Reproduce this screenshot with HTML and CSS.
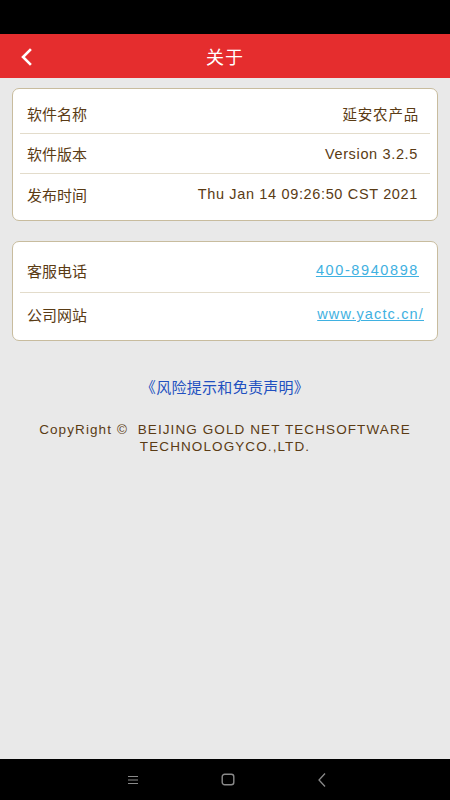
FILE: index.html
```html
<!DOCTYPE html>
<html lang="zh">
<head>
<meta charset="utf-8">
<title>关于</title>
<link rel="stylesheet" href="styles.css">
</head>
<body>
<div class="screen">
  <div class="status"></div>
  <header class="header">
    <svg class="back" width="14" height="18" viewBox="0 0 14 18"><path d="M10 2 L3 9 L10 16" fill="none" stroke="#fff" stroke-width="2.6" stroke-linecap="square" stroke-linejoin="miter"/></svg>
    <h1 class="title">关于</h1>
  </header>
  <main class="content">
    <section class="card card-info">
      <div class="row"><span class="label">软件名称</span><span class="value value-cjk">延安农产品</span></div>
      <div class="row"><span class="label">软件版本</span><span class="value">Version 3.2.5</span></div>
      <div class="row"><span class="label">发布时间</span><span class="value">Thu Jan 14 09:26:50 CST 2021</span></div>
    </section>
    <section class="card card-contact">
      <div class="row"><span class="label">客服电话</span><a class="link link-phone" href="#">400-8940898</a></div>
      <div class="row"><span class="label">公司网站</span><a class="link link-web" href="#">www.yactc.cn/</a></div>
    </section>
    <p class="disclaimer">《风险提示和免责声明》</p>
    <p class="copyright">CopyRight ©&nbsp; BEIJING GOLD NET TECHSOFTWARE<br>TECHNOLOGYCO.,LTD.</p>
  </main>
  <nav class="navbar">
    <svg width="12" height="12" viewBox="0 0 12 12"><path d="M1 2.5H11M1 6H11M1 9.5H11" stroke="#8a8a8a" stroke-width="1.2"/></svg>
    <svg width="14" height="13" viewBox="0 0 14 13"><rect x="1.2" y="1.2" width="11.6" height="10.6" rx="2.5" fill="none" stroke="#8a8a8a" stroke-width="1.4"/></svg>
    <svg width="10" height="16" viewBox="0 0 10 16"><path d="M8 1.5 L2 8 L8 14.5" fill="none" stroke="#8a8a8a" stroke-width="1.3"/></svg>
  </nav>
</div>
</body>
</html>
```
FILE: styles.css
```css
* { box-sizing: border-box; }
html, body { margin: 0; padding: 0; }
body {
  font-family: "Liberation Sans", "Noto Sans CJK SC", sans-serif;
  background: #e9e9e9;
}
.screen {
  width: 450px;
  height: 800px;
  display: flex;
  flex-direction: column;
  overflow: hidden;
}
.status { height: 34px; background: #000; flex: none; }
.header {
  height: 44px;
  flex: none;
  background: #e52d2e;
  display: flex;
  align-items: center;
  justify-content: center;
  position: relative;
}
.back { position: absolute; left: 20px; top: 14px; }
.title {
  margin: 0;
  font-family: "Noto Sans CJK SC", sans-serif;
  font-size: 18px;
  font-weight: 400;
  color: #fff;
  letter-spacing: 1px;
}
.content {
  flex: 1;
  padding: 10px 12px 0;
  display: flex;
  flex-direction: column;
}
.card {
  background: #fff;
  border: 1px solid #c8bc9e;
  border-radius: 7px;
  padding: 5px 7px 6px;
}
.card-contact { margin-top: 20px; padding: 6px 7px 5px; }
.row {
  display: flex;
  align-items: center;
  justify-content: space-between;
  height: 40px;
  padding: 0 10px 0 7px;
  border-bottom: 1px solid #e3dccb;
  color: #5a3b14;
  font-size: 14px;
}
.card-contact .row { height: 45px; }
.card-contact .row:last-child { height: 42px; }
.row:last-child { border-bottom: none; }
.label {
  font-family: "Noto Sans CJK SC", sans-serif;
  font-size: 15px;
}
.value { font-size: 14.5px; letter-spacing: 0.65px; margin-right: 2px; }
.value-cjk { font-family: "Noto Sans CJK SC", sans-serif; font-size: 14.5px; letter-spacing: 0.8px; margin-right: 1px; }
.link {
  color: #3fb1e1;
  font-size: 14.5px;
  text-decoration: underline;
}
.link-phone { letter-spacing: 1.6px; margin-right: 1px; }
.link-web { letter-spacing: 1.15px; margin-right: -4px; }
.disclaimer {
  margin: 36px 0 0;
  text-align: center;
  font-family: "Noto Sans CJK SC", sans-serif;
  font-size: 15px;
  letter-spacing: 0.3px;
  line-height: 20px;
  color: #2150c0;
}
.copyright {
  margin: 24px 0 0;
  text-align: center;
  font-size: 13.5px;
  letter-spacing: 1.1px;
  line-height: 17px;
  color: #5a3b14;
}
.navbar {
  height: 41px;
  flex: none;
  background: #000;
  display: flex;
  align-items: center;
  justify-content: center;
  gap: 82px;
  padding-left: 4px;
}
```
